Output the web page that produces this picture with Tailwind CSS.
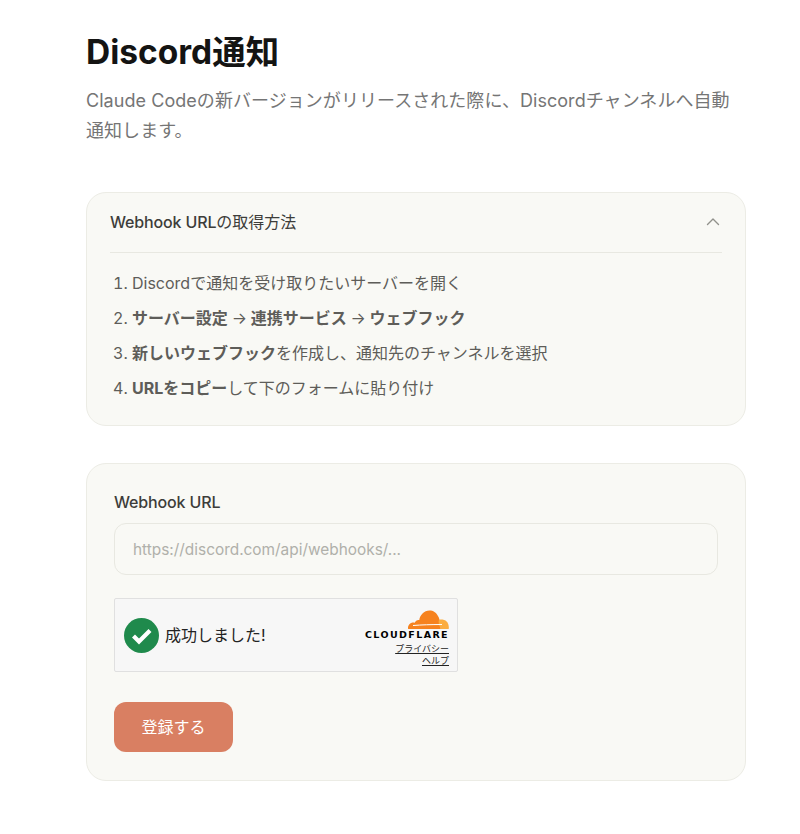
<!DOCTYPE html>
<html lang="ja">
<head>
<meta charset="utf-8">
<title>Discord通知</title>
<script src="https://cdn.jsdelivr.net/npm/@tailwindcss/browser@4"></script>
</head>
<body class="bg-white font-['Inter','Noto_Sans_CJK_JP',sans-serif]">
<main class="w-[660px] ml-[86px] pt-[28px] pb-[54px]">
  <h1 class="text-[33.500px] leading-[48px] font-bold text-[#141413]">Discord通知</h1>
  <p class="mt-[10px] pr-[10px] text-[18px] leading-[30px] tracking-[0.05px] text-[#757575]">Claude Codeの新バージョンがリリースされた際に、Discordチャンネルへ自動通知します。</p>

  <section class="mt-[46px] bg-[#f9f9f5] border border-[#ecece5] rounded-[20px] px-[23px] h-[234px]">
    <div class="h-[60px] pb-[2px] flex items-center justify-between border-b border-[#e8e8e1]">
      <span class="text-[16px] text-[#3d3d3a]"><span class="font-medium tracking-[-0.15px]">Webhook URL</span>の取得方法</span>
      <svg class="mr-[1px]" width="16" height="16" viewBox="0 0 16 16" fill="none" stroke="#91918c" stroke-width="1.4" stroke-linecap="round" stroke-linejoin="round"><path d="M2.500 10.500 8 5l5.500 5.500"/></svg>
    </div>
    <ol class="list-decimal pl-[22px] mt-[13px] text-[16px] leading-[35px] text-[#5e5d59]">
      <li>Discordで通知を受け取りたいサーバーを開く</li>
      <li><b class="font-bold">サーバー設定 <span class="font-normal">→</span> 連携サービス <span class="font-normal">→</span> ウェブフック</b></li>
      <li><b class="font-bold">新しいウェブフック</b>を作成し、通知先のチャンネルを選択</li>
      <li><b class="font-bold">URLをコピー</b>して下のフォームに貼り付け</li>
    </ol>
  </section>

  <section class="mt-[37px] bg-[#f9f9f5] border border-[#ecece5] rounded-[20px] px-[27px] pt-[26px] h-[318px]">
    <label class="block text-[16px] leading-[24px] font-medium tracking-[-0.15px] text-[#3d3d3a]">Webhook URL</label>
    <div class="mt-[9px] h-[52px] pt-[1px] bg-[#f9f9f5] border border-[#e8e8e1] rounded-[12px] px-[18px] flex items-center text-[15.400px] text-[#b0b0aa]">https://discord.com/api/webhooks/...</div>

    <div class="mt-[23px] w-[344px] h-[74px] bg-[#f7f7f7] border border-[#e0e0e0] rounded-[2px] flex items-center justify-between pl-[9px] pr-[8px]">
      <div class="flex items-center gap-[6px]">
        <svg width="35" height="35" viewBox="0 0 35 35"><circle cx="17.500" cy="17.500" r="17.500" fill="#1f8a4c"/><path d="M9.500 18l5.500 5.500 11-11" fill="none" stroke="#fff" stroke-width="4.200"/></svg>
        <span class="text-[16px] text-[#232323]">成功しました!</span>
      </div>
      <div class="flex flex-col items-end">
        <svg class="mt-[4px]" width="42" height="20" viewBox="0 0 42 20">
          <path d="M33.800 20H1.200C.6 18.500 1.400 14.800 4.700 13.800 5.600 13.500 6.700 13.500 7.700 13.800 8.500 11.600 10.500 10.500 12.300 11c.5-4.600 4.800-9.500 10.200-9.500 3.600 0 6.900 1.800 8.600 5.800 1.700 2.600 2.800 8 2.700 12.700z" fill="#f6821f"/>
          <path d="M34 20h7.700c.5-3.600-.6-8.600-6.200-9.500-2-.3-3.200 0-3.700 1-.5 2.500.4 5.500 2.200 8.500z" fill="#fbad41"/>
          <path d="M6 16.500c8-.7 18-.9 29-1" stroke="#fff" stroke-width="1" fill="none"/>
        </svg>
        <span class="mt-[0px] text-[9.500px] leading-[11px] font-bold tracking-[1.400px] text-black font-['DejaVu_Sans',sans-serif]">CLOUDFLARE</span>
        <a class="mt-[3px] text-[9px] leading-[11px] text-[#232323] underline">プライバシー</a>
        <a class="mt-[1px] text-[9px] leading-[11px] text-[#232323] underline">ヘルプ</a>
      </div>
    </div>

    <button class="mt-[30px] block w-[119px] h-[50px] rounded-[12px] bg-[#d97f62] text-white text-[16px] text-center">登録する</button>
  </section>
</main>
</body>
</html>
